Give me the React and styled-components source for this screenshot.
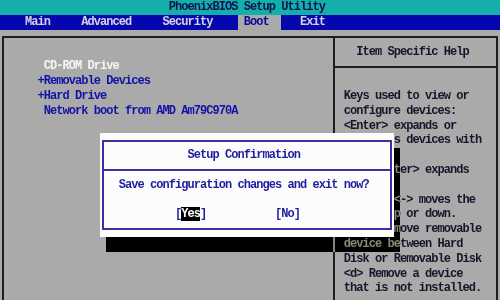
import React from "react";
import styled, { createGlobalStyle } from "styled-components";

const CW = 6.25; // character cell width
const RH = 14.8; // character cell height
const col = (n) => `${n * CW}px`;

const Global = createGlobalStyle`
  html, body { margin: 0; padding: 0; background: #aaaaaa; }
`;

const Screen = styled.div`
  position: relative;
  width: 500px;
  height: 300px;
  overflow: hidden;
  background: #aaaaaa;
  display: flex;
  flex-direction: column;
  font-family: "Liberation Mono", "DejaVu Sans Mono", monospace;
  font-weight: bold;
  font-size: 12px;
  letter-spacing: -0.95px;
  line-height: ${RH}px;
  white-space: pre;
`;

const TitleBar = styled.div`
  height: ${RH}px;
  background: #14afab;
  color: #0c1450;
  text-align: center;
  padding-right: ${CW}px;
`;

const MenuBar = styled.div`
  height: ${RH}px;
  background: #0606ae;
  display: flex;
  padding-left: ${col(3)};
`;

const MenuItem = styled.div`
  padding: 0 ${(p) => (p.$active ? col(2) : col(1))} 0 ${CW}px;
  margin-right: ${(p) => (p.$active ? col(2) : col(3))};
  color: ${(p) => (p.$active ? "#0a0a90" : "#d2d2e4")};
  background: ${(p) => (p.$active ? "#aaaaaa" : "transparent")};
`;

const Body = styled.div`
  flex: 1;
  padding-top: 6.7px;
  display: flex;
`;

const Frame = styled.div`
  margin-left: 2px;
  width: 496px;
  box-sizing: border-box;
  border: 2px solid #1e1e22;
  border-bottom: none;
  display: grid;
  grid-template-columns: 329.4px 1fr;
`;

const LeftPanel = styled.div`
  padding-top: 21.2px;
  padding-left: 33.5px;
`;

const Entry = styled.div`
  height: ${RH}px;
  color: ${(p) => (p.$selected ? "#f6f6f6" : "#1212a8")};
`;

const RightPanel = styled.div`
  border-left: 2px solid #1e1e22;
`;

const HelpTitle = styled.div`
  padding-top: 6.4px;
  padding-left: 20.85px;
  height: ${RH}px;
  color: #16162a;
`;

const HelpRule = styled.div`
  margin-top: 6.4px;
  height: 2px;
  background: #1e1e22;
`;

const HelpBody = styled.div`
  padding-top: 21.2px;
  padding-left: 8.35px;
  color: #16162a;
`;

const HelpLine = styled.div`
  height: ${RH}px;
`;

const Dialog = styled.div`
  position: absolute;
  left: 100px;
  top: 133.2px;
  width: ${col(47)};
  height: ${RH * 7}px;
  box-sizing: border-box;
  background: #fcfcfc;
  padding: 6.4px 2.1px;
`;

const DialogInner = styled.div`
  height: 100%;
  box-sizing: border-box;
  border: 2px solid #3a32a0;
  color: #1e1ea0;
`;

const DialogRow = styled.div`
  height: ${RH}px;
  padding-left: calc(2.15px + ${(p) => col(p.$indent || 0)});
  padding-top: ${(p) => (p.$padTop ? "6.4px" : "0")};
`;

const DialogRule = styled.div`
  margin-top: 6.4px;
  height: 2px;
  background: #3a32a0;
`;

const Buttons = styled.div`
  display: flex;
  height: ${RH}px;
  padding-left: calc(2.15px + ${col(11)});
`;

const Choice = styled.span`
  margin-right: ${(p) => col(p.$gap || 0)};
`;

const Highlight = styled.span`
  background: #000000;
  color: #ffffff;
`;

const Shadow = styled.div`
  position: absolute;
  backdrop-filter: invert(1) brightness(0.575) contrast(1.617);
`;

const ShadowRight = styled(Shadow)`
  left: ${col(63)};
  top: ${RH * 10}px;
  width: ${CW}px;
  height: ${RH * 6}px;
`;

const ShadowBottom = styled(Shadow)`
  left: ${col(17)};
  top: ${RH * 16}px;
  width: ${col(47)};
  height: ${RH}px;
`;

const menu = ["Main", "Advanced", "Security", "Boot", "Exit"];

const entries = [
  { text: " CD-ROM Drive", selected: true },
  { text: "+Removable Devices" },
  { text: "+Hard Drive" },
  { text: " Network boot from AMD Am79C970A" },
];

const help = [
  "Keys used to view or",
  "configure devices:",
  "<Enter> expands or",
  "collapses devices with",
  "a + or -",
  "<Ctrl+Enter> expands",
  "all",
  "<+> and <-> moves the",
  "device up or down.",
  "<n> May move removable",
  "device between Hard",
  "Disk or Removable Disk",
  "<d> Remove a device",
  "that is not installed.",
];

export default function App() {
  return (
    <Screen>
      <Global />
      <TitleBar>PhoenixBIOS Setup Utility</TitleBar>
      <MenuBar>
        {menu.map((m) => (
          <MenuItem key={m} $active={m === "Boot"}>
            {m}
          </MenuItem>
        ))}
      </MenuBar>
      <Body>
        <Frame>
          <LeftPanel>
            {entries.map((e) => (
              <Entry key={e.text} $selected={e.selected}>
                {e.text}
              </Entry>
            ))}
          </LeftPanel>
          <RightPanel>
            <HelpTitle>Item Specific Help</HelpTitle>
            <HelpRule />
            <HelpBody>
              {help.map((h, i) => (
                <HelpLine key={i}>{h}</HelpLine>
              ))}
            </HelpBody>
          </RightPanel>
        </Frame>
      </Body>
      <ShadowRight />
      <ShadowBottom />
      <Dialog>
        <DialogInner>
          <DialogRow $indent={13} $padTop>
            Setup Confirmation
          </DialogRow>
          <DialogRule />
          <DialogRow $indent={2} $padTop>
            Save configuration changes and exit now?
          </DialogRow>
          <DialogRow />
          <Buttons>
            <Choice $gap={11}>
              [<Highlight>Yes</Highlight>]
            </Choice>
            <Choice>[No]</Choice>
          </Buttons>
        </DialogInner>
      </Dialog>
    </Screen>
  );
}
